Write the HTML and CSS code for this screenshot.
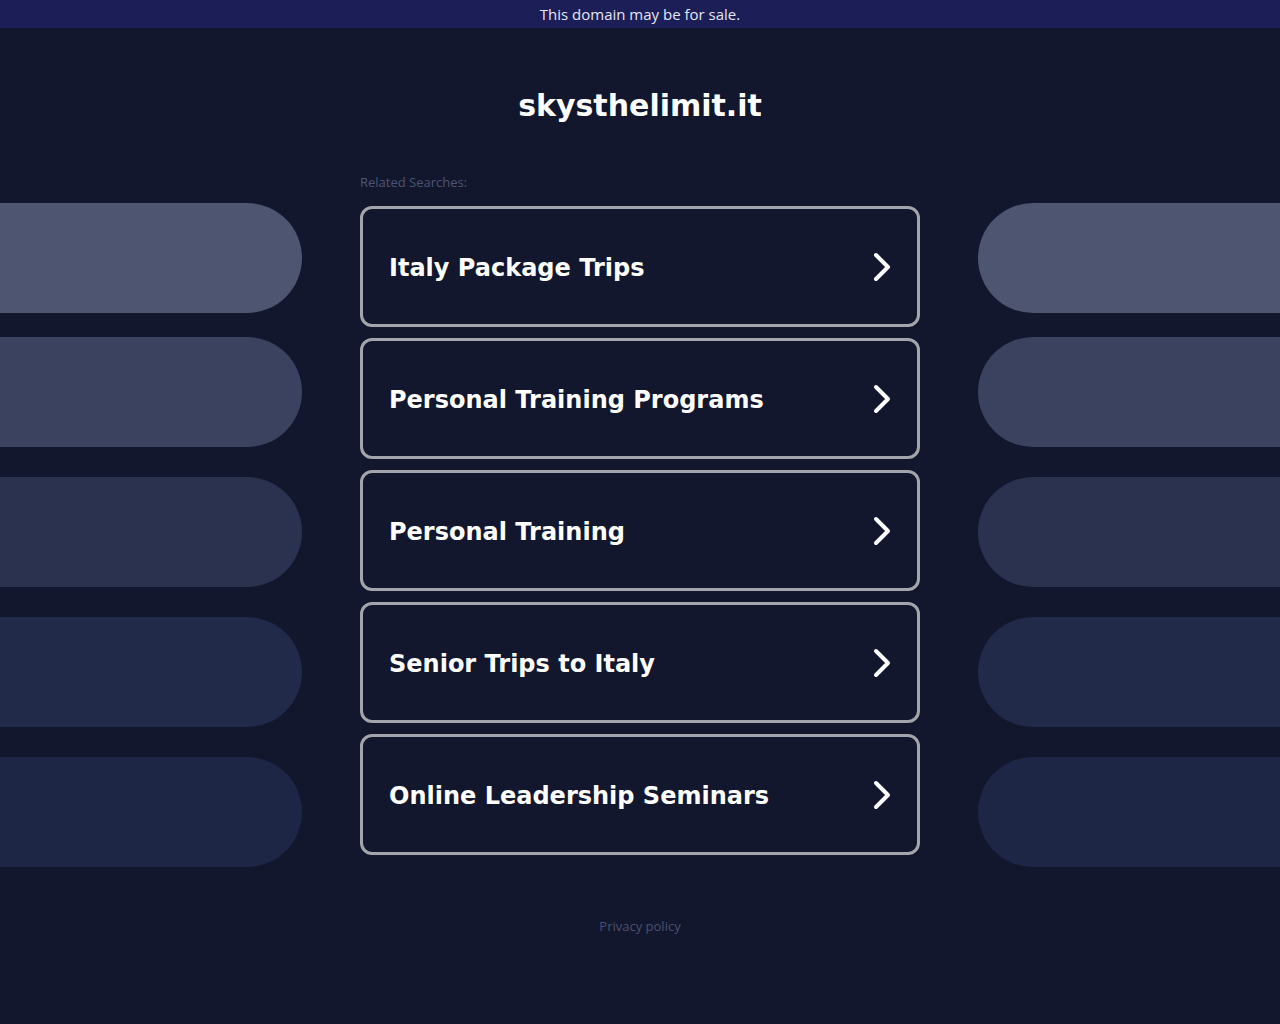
FILE: index.html
```html
<!DOCTYPE html>
<html lang="en">
<head>
<meta charset="utf-8">
<title>skysthelimit.it</title>
<link rel="stylesheet" href="styles.css">
</head>
<body>
<div class="topbar">This domain may be for sale.</div>
<h1 class="title">skysthelimit.it</h1>
<div class="main">
  <div class="side side-left">
    <div class="pill pill-1"></div>
    <div class="pill pill-2"></div>
    <div class="pill pill-3"></div>
    <div class="pill pill-4"></div>
    <div class="pill pill-5"></div>
  </div>
  <div class="center">
    <div class="label">Related Searches:</div>
    <a class="card" href="#"><span class="card-text">Italy Package Trips</span><svg class="chev" viewBox="0 0 20 30" width="20" height="30"><polyline points="4,3 16,15 4,27" fill="none" stroke="#fff" stroke-width="4" stroke-linecap="round" stroke-linejoin="round"/></svg></a>
    <a class="card" href="#"><span class="card-text">Personal Training Programs</span><svg class="chev" viewBox="0 0 20 30" width="20" height="30"><polyline points="4,3 16,15 4,27" fill="none" stroke="#fff" stroke-width="4" stroke-linecap="round" stroke-linejoin="round"/></svg></a>
    <a class="card" href="#"><span class="card-text">Personal Training</span><svg class="chev" viewBox="0 0 20 30" width="20" height="30"><polyline points="4,3 16,15 4,27" fill="none" stroke="#fff" stroke-width="4" stroke-linecap="round" stroke-linejoin="round"/></svg></a>
    <a class="card" href="#"><span class="card-text">Senior Trips to Italy</span><svg class="chev" viewBox="0 0 20 30" width="20" height="30"><polyline points="4,3 16,15 4,27" fill="none" stroke="#fff" stroke-width="4" stroke-linecap="round" stroke-linejoin="round"/></svg></a>
    <a class="card" href="#"><span class="card-text">Online Leadership Seminars</span><svg class="chev" viewBox="0 0 20 30" width="20" height="30"><polyline points="4,3 16,15 4,27" fill="none" stroke="#fff" stroke-width="4" stroke-linecap="round" stroke-linejoin="round"/></svg></a>
  </div>
  <div class="side side-right">
    <div class="pill pill-1"></div>
    <div class="pill pill-2"></div>
    <div class="pill pill-3"></div>
    <div class="pill pill-4"></div>
    <div class="pill pill-5"></div>
  </div>
</div>
<div class="footer"><a href="#" class="privacy">Privacy policy</a></div>
</body>
</html>
```
FILE: styles.css
```css
html, body {
  margin: 0;
  padding: 0;
  background: #12172d;
  min-height: 100%;
}
body {
  font-family: "Open Sans", "DejaVu Sans", sans-serif;
  overflow: hidden;
}
.topbar {
  height: 28px;
  line-height: 28px;
  background: #1c1e58;
  color: #e4e6f4;
  font-size: 15px;
  text-align: center;
}
.title {
  margin: 59px 0 0;
  font-family: "DejaVu Sans", sans-serif;
  font-weight: bold;
  font-size: 30px;
  line-height: 38px;
  color: #ffffff;
  text-align: center;
}
.main {
  display: grid;
  grid-template-columns: 1fr 560px 1fr;
  column-gap: 58px;
  margin-top: 45px;
}
.side {
  display: flex;
  flex-direction: column;
  gap: 30px;
  padding-top: 33px;
}
.pill {
  height: 110px;
}
.pill-1 { margin-bottom: -6px; background: #4d5570; }
.pill-2 { background: #3b425f; }
.pill-3 { background: #2b3250; }
.pill-4 { background: #222a4a; }
.pill-5 { background: #1e2646; }
.side-left .pill { border-radius: 0 55px 55px 0; }
.side-right .pill { border-radius: 55px 0 0 55px; }
.center {
  display: flex;
  flex-direction: column;
}
.label {
  font-size: 13px;
  line-height: 20px;
  padding-top: 2px;
  color: #4e5574;
  margin-bottom: 14px;
}
.card {
  box-sizing: border-box;
  height: 121px;
  margin-bottom: 11px;
  border: 3px solid #a3a5aa;
  border-radius: 12px;
  display: flex;
  align-items: center;
  justify-content: space-between;
  padding: 2px 25px 0 26px;
  text-decoration: none;
  color: #ffffff;
}
.card-text {
  font-family: "DejaVu Sans", sans-serif;
  font-weight: bold;
  font-size: 24px;
}
.chev {
  display: block;
  margin-top: -1px;
}
.footer {
  margin-top: 50px;
  text-align: center;
  line-height: 16px;
}
.privacy {
  font-size: 13px;
  color: #4a5070;
  text-decoration: none;
}
```
